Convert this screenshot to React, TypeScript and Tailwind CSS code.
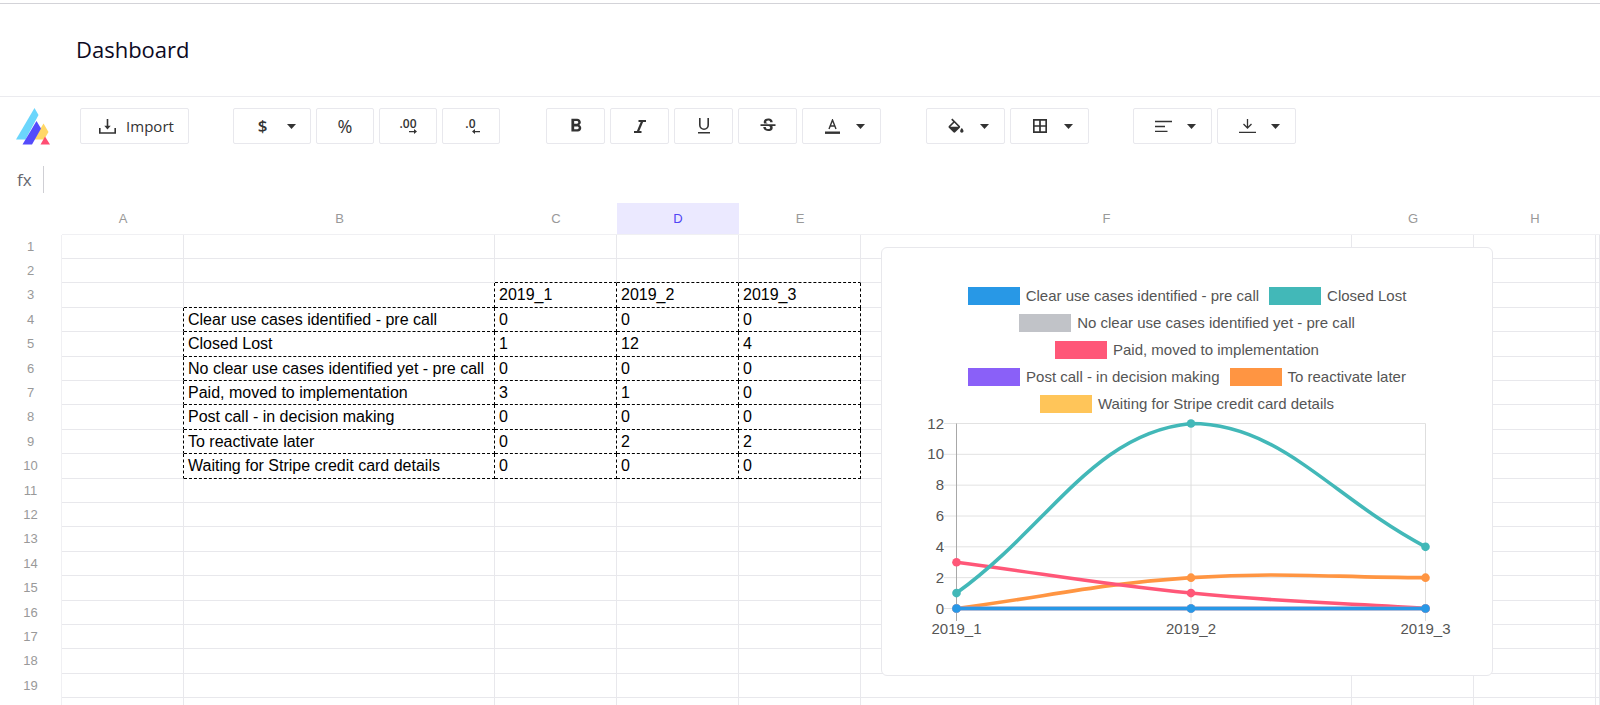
import type { ReactNode } from "react";
import { MdFormatBold, MdStrikethroughS } from "react-icons/md";
import clsx from "clsx";

const columns = [
  { name: "A", width: "w-[122px]" },
  { name: "B", width: "w-[311px]" },
  { name: "C", width: "w-[122px]" },
  { name: "D", width: "w-[122px]" },
  { name: "E", width: "w-[122px]" },
  { name: "F", width: "w-[491px]" },
  { name: "G", width: "w-[122px]" },
  { name: "H", width: "w-[122px]" },
  { name: "", width: "" },
];

const periods = ["2019_1", "2019_2", "2019_3"];

const series = [
  { label: "Clear use cases identified - pre call", values: [0, 0, 0], color: "#2898e6", swatch: "bg-[#2898e6]" },
  { label: "Closed Lost", values: [1, 12, 4], color: "#42b8b8", swatch: "bg-[#42b8b8]" },
  { label: "No clear use cases identified yet - pre call", values: [0, 0, 0], color: "#c1c3c8", swatch: "bg-[#c1c3c8]" },
  { label: "Paid, moved to implementation", values: [3, 1, 0], color: "#ff5778", swatch: "bg-[#ff5778]" },
  { label: "Post call - in decision making", values: [0, 0, 0], color: "#8a60f8", swatch: "bg-[#8a60f8]" },
  { label: "To reactivate later", values: [0, 2, 2], color: "#ff9542", swatch: "bg-[#ff9542]" },
  { label: "Waiting for Stripe credit card details", values: [0, 0, 0], color: "#ffc559", swatch: "bg-[#ffc559]" },
];

const ROW_COUNT = 20;

// row and col are zero based, the pivot starts at B3
const cellValue = (row: number, col: number) => {
  if (row === 2 && col >= 2 && col <= 4) return periods[col - 2];
  if (row < 3 || row > 9) return "";
  if (col === 1) return series[row - 3].label;
  if (col >= 2 && col <= 4) return String(series[row - 3].values[col - 2]);
  return "";
};

const inPivot = (row: number, col: number) => cellValue(row, col) !== "";

function Logo() {
  return (
    <svg className="w-[34px] h-[37px]" viewBox="0 0 34 37" aria-label="Logo">
      <path d="M18.500 0 L22.500 7 L9.500 31.500 H0 Z" fill="#6bd6fc" />
      <path d="M27.500 15.500 L32.500 24 L28 31.500 H18 Z" fill="#ffd766" />
      <path d="M20.500 13 L25 20.500 L16 36.500 H6.500 Z" fill="#544bfb" />
      <path d="M29 28.500 L34 36.500 H24.500 Z" fill="#ff4d73" />
    </svg>
  );
}

function ToolButton({ label, children, className }: { label: string; children: ReactNode; className: string }) {
  return (
    <button
      aria-label={label}
      className={clsx("h-9 shrink-0 flex items-center justify-center rounded-xs border border-[#e8e8ed] bg-white text-[#333]", className)}
    >
      {children}
    </button>
  );
}

function MenuButton({ label, children, className = "w-[79px]" }: { label: string; children: ReactNode; className?: string }) {
  return (
    <ToolButton label={label} className={clsx("gap-3.5", className)}>
      <span className="w-5 ml-1 flex justify-center">{children}</span>
      <svg className="w-[9px] h-[5px]" viewBox="0 0 9 5" fill="currentColor">
        <path d="M0 0h9L4.500 5z" />
      </svg>
    </ToolButton>
  );
}

function DecimalIcon({ digits, back }: { digits: string; back?: boolean }) {
  return (
    <span className="flex flex-col items-end w-[17px] text-xs leading-[10px] font-semibold">
      <span className={clsx(back && "mr-1")}>{digits}</span>
      <svg className="w-2 h-[5px]" viewBox="0 0 8 5" fill="currentColor">
        <path d={back ? "M8 1.900v1.400H3V5L0 2.600 3 0v1.900z" : "M0 1.900v1.400h5V5l3-2.400L5 0v1.900z"} />
      </svg>
    </span>
  );
}

function Toolbar() {
  return (
    <div className="flex items-center px-4 h-[58px]">
      <Logo />
      <ToolButton label="Import" className="ml-[30px] w-[109px] gap-2.5 pl-1">
        <svg className="w-[17px] h-[15px]" viewBox="0 0 17 15" fill="none" stroke="currentColor" strokeWidth="1.600">
          <path d="M.8 9v5h15.400V9M8.500 0v8" />
          <path d="M5.300 6.700h6.400L8.500 10.500z" fill="currentColor" stroke="none" />
        </svg>
        <span className="text-[15px] leading-5">Import</span>
      </ToolButton>

      <div className="flex gap-[5px] ml-11">
        <MenuButton label="Currency format" className="w-[78px]">
          <span className="text-[17px] leading-5 font-semibold">$</span>
        </MenuButton>
        <ToolButton label="Percent format" className="w-[58px]">
          <span className="text-lg leading-5 font-medium">%</span>
        </ToolButton>
        <ToolButton label="Increase decimals" className="w-[58px]">
          <DecimalIcon digits=".00" />
        </ToolButton>
        <ToolButton label="Decrease decimals" className="w-[58px]">
          <DecimalIcon digits=".0" back />
        </ToolButton>
      </div>

      <div className="flex gap-[5px] ml-[46px]">
        <ToolButton label="Bold" className="w-[59px]">
          <MdFormatBold size={22} />
        </ToolButton>
        <ToolButton label="Italic" className="w-[59px]">
          <svg className="w-3 h-[13px]" viewBox="0 0 12 13" fill="none" stroke="currentColor" strokeWidth="1.800">
            <path d="M4.500 1H12M0 12h7.500" />
            <path d="M8.300 1L3.700 12" strokeWidth="2.200" />
          </svg>
        </ToolButton>
        <ToolButton label="Underline" className="w-[59px]">
          <svg className="w-3 h-4" viewBox="0 0 12 16" fill="none" stroke="currentColor" strokeWidth="1.600">
            <path d="M1.800 0v7a4.200 4.200 0 0 0 8.400 0V0M0 14.800h12" />
          </svg>
        </ToolButton>
        <ToolButton label="Strikethrough" className="w-[59px]">
          <MdStrikethroughS size={20} />
        </ToolButton>
        <MenuButton label="Text color">
          <svg className="w-[15px] h-[15px]" viewBox="0 0 15 15" fill="none" stroke="currentColor">
            <path d="M4 10L7.500 1 11 10M5.200 7h4.600" strokeWidth="1.400" />
            <path d="M0 13.700h15" strokeWidth="2.400" />
          </svg>
        </MenuButton>
      </div>

      <div className="flex gap-[5px] ml-[45px]">
        <MenuButton label="Fill color">
          <svg className="w-5 h-5" viewBox="0 -3 24 24" fill="currentColor">
            <path d="M16.560 8.940L7.620 0 6.210 1.410l2.380 2.380-5.150 5.150a1.490 1.490 0 0 0 0 2.120l5.500 5.500c.29.29.68.44 1.060.44s.77-.15 1.060-.44l5.500-5.500c.59-.58.59-1.530 0-2.120zM5.210 10L10 5.210 14.790 10H5.210zM19 11.500s-2 2.170-2 3.500c0 1.100.9 2 2 2s2-.9 2-2c0-1.330-2-3.500-2-3.500z" />
          </svg>
        </MenuButton>
        <MenuButton label="Borders">
          <svg className="w-3.5 h-3.5" viewBox="0 0 14 14" fill="none" stroke="currentColor" strokeWidth="1.700">
            <path d="M.8.8h12.400v12.400H.8zM7 0v14M0 7h14" />
          </svg>
        </MenuButton>
      </div>

      <div className="flex gap-[5px] ml-11">
        <MenuButton label="Horizontal align">
          <svg className="w-[17px] h-3" viewBox="0 0 17 12" stroke="currentColor" strokeWidth="1.300">
            <path d="M0 1.500h17M0 6.500h10M0 11.300h12.500" />
          </svg>
        </MenuButton>
        <MenuButton label="Vertical align">
          <svg className="w-[17px] h-3.5" viewBox="0 0 17 14" fill="none" stroke="currentColor" strokeWidth="1.300">
            <path d="M8.500 0v9M4.500 5l4 4 4-4M0 13.300h17" />
          </svg>
        </MenuButton>
      </div>
    </div>
  );
}

function FormulaBar() {
  return (
    <div className="h-12 flex items-center">
      <label htmlFor="formula" className="w-11 h-[27px] pl-[17px] border-r border-[#cfcfd4] text-[17px] leading-[28px] text-[#66666e]">
        fx
      </label>
      <input id="formula" type="text" className="flex-1 h-full px-3 text-[15px] outline-none" />
    </div>
  );
}

function Sheet() {
  return (
    <table className="w-full table-fixed border-separate border-spacing-0 font-['Liberation_Sans',Arial,sans-serif]">
      <thead>
        <tr className="h-8 text-[13px]">
          <th className="w-[62px] p-0" />
          {columns.map((col, i) => (
            <th
              key={i}
              scope="col"
              className={clsx(
                "p-0 border-b border-[#f0f0f3] font-normal",
                col.width,
                col.name === "D" ? "bg-[#ebe9ff] text-[#4f46f5]" : "text-[#999]"
              )}
            >
              {col.name}
            </th>
          ))}
        </tr>
      </thead>
      <tbody>
        {Array.from({ length: ROW_COUNT }, (_, row) => (
          <tr key={row} className={clsx("align-top", row % 5 === 2 || row % 5 === 4 ? "h-[25px]" : "h-6")}>
            <th scope="row" className="p-0 border-r border-[#f0f0f3] text-[13px] leading-[23px] font-normal text-[#999]">
              {row + 1}
            </th>
            {columns.map((_, col) => (
              <td
                key={col}
                className={clsx(
                  "p-0 pl-1 border-r border-b whitespace-nowrap text-base leading-[23px] text-black",
                  inPivot(row, col) || inPivot(row, col + 1)
                    ? "border-r-black [border-right-style:dashed]"
                    : "border-r-[#e8e8ec]",
                  inPivot(row, col) || inPivot(row + 1, col)
                    ? "border-b-black [border-bottom-style:dashed]"
                    : "border-b-[#e8e8ec]"
                )}
              >
                {cellValue(row, col)}
              </td>
            ))}
          </tr>
        ))}
      </tbody>
    </table>
  );
}

const plot = { left: 74.5, right: 543.5, top: 10.5, bottom: 195.5, max: 12 };
const tension = 0.4;

const toX = (i: number) => plot.left + (i * (plot.right - plot.left)) / (periods.length - 1);
const toY = (v: number) => plot.bottom - (v * (plot.bottom - plot.top)) / plot.max;
const clampY = (y: number) => Math.min(plot.bottom, Math.max(plot.top, y));

function curvePath(values: number[]) {
  const pts = values.map((v, i) => ({ x: toX(i), y: toY(v) }));
  const controls = pts.map((p, i) => {
    const prev = pts[i - 1] ?? p;
    const next = pts[i + 1] ?? p;
    const before = Math.hypot(p.x - prev.x, p.y - prev.y);
    const after = Math.hypot(next.x - p.x, next.y - p.y);
    const a = (tension * before) / (before + after);
    const b = (tension * after) / (before + after);
    return {
      in: `${p.x - a * (next.x - prev.x)} ${clampY(p.y - a * (next.y - prev.y))}`,
      out: `${p.x + b * (next.x - prev.x)} ${clampY(p.y + b * (next.y - prev.y))}`,
    };
  });
  return pts
    .map((p, i) => (i === 0 ? `M${p.x} ${p.y}` : `C${controls[i - 1].out} ${controls[i].in} ${p.x} ${p.y}`))
    .join(" ");
}

function Chart() {
  return (
    <div className="w-[612px] h-[429px] pt-[39px] bg-white border border-[#e8e8ec] rounded-md text-[15px] text-[#555] font-['Liberation_Sans',Arial,sans-serif]">
      <ul className="w-[500px] mx-auto flex flex-wrap justify-center gap-x-2.5 gap-y-[9px]">
        {series.map((s) => (
          <li key={s.label} className="flex items-center gap-1.5 h-[18px]">
            <span className={clsx("w-[52px] h-[18px]", s.swatch)} />
            {s.label}
          </li>
        ))}
      </ul>
      <svg className="block w-[610px] h-[240px]" viewBox="0 0 610 240" fill="#555" fontSize="15">
        {[0, 2, 4, 6, 8, 10, 12].map((tick) => (
          <g key={tick}>
            <path d={`M62 ${toY(tick)}H${plot.right}`} stroke="#e2e2e2" />
            <text x="62" y={toY(tick) + 5} textAnchor="end">
              {tick}
            </text>
          </g>
        ))}
        {periods.map((period, i) => (
          <g key={period}>
            <path d={`M${toX(i)} ${plot.top}V208`} stroke={i === 0 ? "#a8a8a8" : "#dedede"} />
            <text x={toX(i)} y="221" textAnchor="middle">
              {period}
            </text>
          </g>
        ))}
        {[...series].reverse().map((s) => (
          <g key={s.label} fill={s.color}>
            <path d={curvePath(s.values)} fill="none" stroke={s.color} strokeWidth="3.600" />
            {s.values.map((v, i) => (
              <circle key={i} cx={toX(i)} cy={toY(v)} r="4.300" />
            ))}
          </g>
        ))}
      </svg>
    </div>
  );
}

export default function App() {
  return (
    <div className="h-screen overflow-hidden bg-white pt-[3px] font-['Open_Sans',sans-serif]">
      <header className="h-[94px] flex items-center pl-[76px] pb-0.5 border-t border-t-[#d3d3d8] border-b border-b-[#ebebef]">
        <h1 className="text-[22px] leading-8 text-[#0d0a1f]">Dashboard</h1>
      </header>
      <Toolbar />
      <FormulaBar />
      <main className="relative">
        <Sheet />
        {/* Chart floats over the grid */}
        <div className="absolute left-[881px] top-11">
          <Chart />
        </div>
      </main>
    </div>
  );
}
